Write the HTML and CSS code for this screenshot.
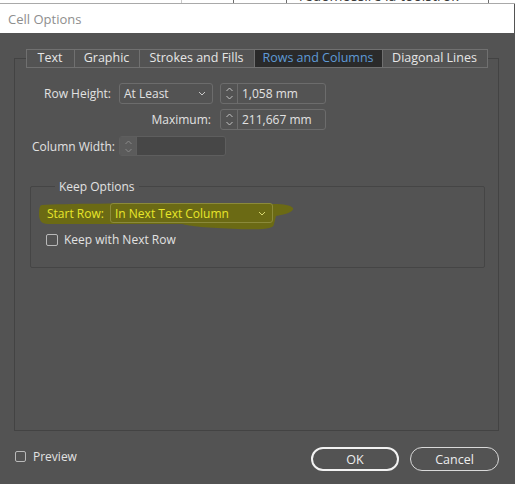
FILE: index.html
```html
<!DOCTYPE html>
<html>
<head>
<meta charset="utf-8">
<title>Cell Options</title>
<link rel="stylesheet" href="styles.css">
</head>
<body>
<div class="docstrip">
  <div class="cell c1"></div>
  <div class="cell c2"></div>
  <div class="cell c3"></div>
  <div class="cell c4"><span class="doctext">redomossire la toolstrok</span></div>
</div>
<div class="titlebar">Cell Options</div>
<div class="dialog">
  <div class="panel">
    <div class="tabs">
      <div class="tab">Text</div>
      <div class="tab">Graphic</div>
      <div class="tab">Strokes and Fills</div>
      <div class="tab active">Rows and Columns</div>
      <div class="tab">Diagonal Lines</div>
    </div>

    <div class="form">
      <div class="row">
        <span class="lbl">Row Height:</span>
        <div class="select w-atleast">
          <span>At Least</span>
          <svg class="chev" width="8" height="5" viewBox="0 0 8 5"><path d="M1 1 L4 4 L7 1" fill="none" stroke="#c8c8c8" stroke-width="1"/></svg>
        </div>
        <div class="spinner">
          <div class="arrows">
            <svg width="9" height="17" viewBox="0 0 9 17"><path d="M1.5 6 L4.5 3 L7.5 6 M1.5 11 L4.5 14 L7.5 11" fill="none" stroke="#c4c4c4" stroke-width="1"/></svg>
          </div>
          <span class="val">1,058 mm</span>
        </div>
      </div>
      <div class="row r2">
        <span class="lbl wide">Maximum:</span>
        <div class="spinner">
          <div class="arrows">
            <svg width="9" height="17" viewBox="0 0 9 17"><path d="M1.5 6 L4.5 3 L7.5 6 M1.5 11 L4.5 14 L7.5 11" fill="none" stroke="#c4c4c4" stroke-width="1"/></svg>
          </div>
          <span class="val">211,667 mm</span>
        </div>
      </div>
      <div class="row r3">
        <span class="lbl">Column Width:</span>
        <div class="spinner disabled">
          <div class="arrows">
            <svg width="9" height="17" viewBox="0 0 9 17"><path d="M1.5 6 L4.5 3 L7.5 6 M1.5 11 L4.5 14 L7.5 11" fill="none" stroke="#8a8a8a" stroke-width="1"/></svg>
          </div>
          <span class="val"></span>
        </div>
      </div>
    </div>

    <fieldset class="keep">
      <legend>Keep Options</legend>
      <div class="startrow">
        <svg class="marker" width="258" height="30" viewBox="0 0 258 30">
          <path d="M4 3 C40 1 200 1 236 2 C246 2 252 3 255 6 C256 9 250 12 238 14 L236 22 C236 27 225 28 200 27 C170 26 150 24 144 22 L10 22 C3 22 1 18 1 12 C1 6 2 3 4 3 Z" fill="#6b6a14"/>
        </svg>
        <span class="hl-label">Start Row:</span>
        <div class="select w-startrow hl">
          <span>In Next Text Column</span>
          <svg class="chev" width="8" height="5" viewBox="0 0 8 5"><path d="M1 1 L4 4 L7 1" fill="none" stroke="#d8d870" stroke-width="1"/></svg>
        </div>
      </div>
      <label class="check">
        <span class="box"></span>
        <span>Keep with Next Row</span>
      </label>
    </fieldset>
  </div>

  <div class="footer">
    <label class="check preview">
      <span class="box"></span>
      <span>Preview</span>
    </label>
    <div class="buttons">
      <button class="btn primary">OK</button>
      <button class="btn">Cancel</button>
    </div>
  </div>
</div>
</body>
</html>
```
FILE: styles.css
```css
* { box-sizing: border-box; }

body {
  margin: 0;
  width: 515px;
  height: 484px;
  overflow: hidden;
  background: #535353;
  font-family: "Open Sans", "Noto Sans", sans-serif;
  font-size: 12px;
  color: #e2e2e2;
}

/* background document strip */
.docstrip {
  height: 4px;
  background: #ffffff;
  border-bottom: 1px solid #a9a9a9;
  display: flex;
  overflow: hidden;
}
.cell { height: 100%; border-right: 1px solid #6d6d6d; }
.c1 { width: 182px; border-right-color: #c9c9c9; }
.c2 { width: 52px; }
.c3 { width: 53px; }
.c4 { width: 202px; position: relative; overflow: hidden; }
.doctext {
  display: block;
  font-size: 14px;
  line-height: 14px;
  margin-top: -11px;
  padding-left: 12px;
  color: #3a3a3a;
  white-space: nowrap;
}

.titlebar {
  height: 29px;
  background: #ffffff;
  color: #8e8e8e;
  font-size: 13px;
  padding-left: 8px;
  display: flex;
  align-items: center;
  margin-right: 1px;
}

.dialog {
  height: 451px;
  padding: 25px 16px 0 14px;
  display: flex;
  flex-direction: column;
}

.panel {
  height: 373px;
  border: 1px solid #434343;
  display: flex;
  flex-direction: column;
}

.tabs {
  margin-top: -10px;
  align-self: center;
  display: grid;
  grid-template-columns: 47px 65px 115px 128px 105px;
  height: 19px;
  border: 1px solid #707070;
  background: #535353;
}
.tab {
  display: flex;
  align-items: center;
  justify-content: center;
  border-left: 1px solid #707070;
  font-size: 12.5px;
  color: #e6e6e6;
  white-space: nowrap;
  line-height: 1;
}
.tab:first-child { border-left: none; }
.tab.active { background: #2a2a2a; color: #5f9ad6; }

.form {
  margin-top: 15px;
  padding-left: 17px;
}
.row {
  display: flex;
  align-items: center;
  height: 21px;
}
.r2 { margin-top: 5px; }
.r3 { margin-top: 6px; height: 20px; }

.lbl {
  width: 79px;
  text-align: right;
  margin-right: 8px;
  white-space: nowrap;
}
.lbl.wide { width: 179px; margin-right: 9px; }

.select {
  height: 21px;
  border: 1px solid #6c6c6c;
  border-radius: 3px;
  display: flex;
  align-items: center;
  justify-content: space-between;
  padding: 0 6px 0 4px;
  white-space: nowrap;
}
.w-atleast { width: 94px; margin-right: 7px; }
.chev { display: block; }

.spinner {
  width: 106px;
  height: 21px;
  border: 1px solid #6c6c6c;
  border-radius: 3px;
  display: flex;
  align-items: stretch;
  overflow: hidden;
}
.arrows {
  width: 17px;
  border-right: 1px solid #6c6c6c;
  display: flex;
  align-items: center;
  justify-content: center;
}
.val {
  flex: 1;
  padding-left: 4px;
  display: flex;
  align-items: center;
  white-space: nowrap;
}
.spinner.disabled {
  width: 107px;
  height: 20px;
  border-color: #5e5e5e;
}
.spinner.disabled .arrows { background: #5b5b5b; border-right-color: #5e5e5e; }
.spinner.disabled .val { background: #474747; }

.keep {
  margin: 22px 13px 0 15px;
  padding: 0 0 0 16px;
  height: 90px;
  border: 1px solid #454545;
  border-radius: 2px;
}
.keep legend {
  margin-left: 8px;
  padding: 0 4px;
  font-size: 12px;
  color: #e2e2e2;
}

.startrow {
  position: relative;
  display: flex;
  align-items: center;
  margin-top: 8px;
  height: 20px;
}
.marker {
  position: absolute;
  left: -9px;
  top: -1px;
}
.hl-label {
  position: relative;
  color: #e8e62a;
  width: 63px;
  white-space: nowrap;
}
.select.w-startrow {
  position: relative;
  width: 163px;
  height: 20px;
  border-color: #8b8a3a;
  color: #e8e62a;
  padding-right: 6px;
}

.check {
  display: flex;
  align-items: center;
  gap: 6px;
  margin-top: 8px;
  margin-left: -1px;
  white-space: nowrap;
}
.box {
  width: 12px;
  height: 12px;
  border: 1px solid #b9b9b9;
  border-radius: 2px;
}

.footer {
  margin-top: 16px;
  height: 24px;
  display: flex;
  align-items: center;
  justify-content: space-between;
}
.check.preview { margin: 0 0 6px 1px; gap: 7px; }
.check.preview .box { width: 11px; height: 11px; }

.buttons { display: flex; gap: 11px; }
.btn {
  width: 89px;
  height: 24px;
  border-radius: 13px;
  border: 1px solid #d9d9d9;
  background: transparent;
  color: #ededed;
  font-family: "Open Sans", "Noto Sans", sans-serif;
  font-size: 12.5px;
  padding: 0;
}
.btn.primary { width: 88px; border: 2px solid #f2f2f2; }
```
